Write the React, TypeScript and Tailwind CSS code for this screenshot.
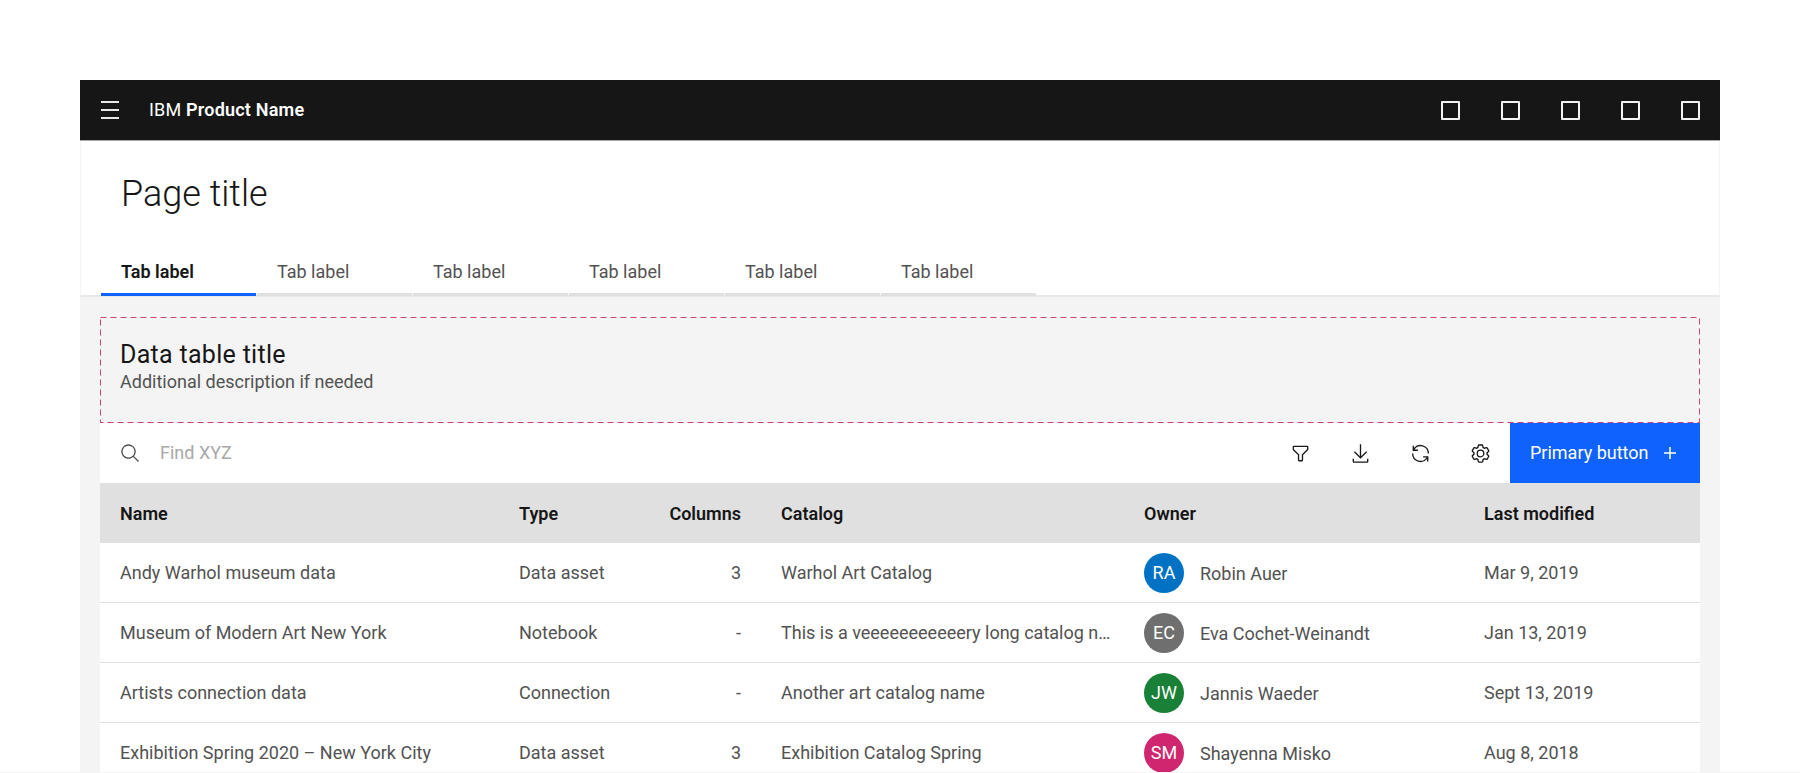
const rows = [
  { name: "Andy Warhol museum data", type: "Data asset", columns: "3", catalog: "Warhol Art Catalog", initials: "RA", owner: "Robin Auer", color: "bg-[#0072c3]", modified: "Mar 9, 2019" },
  { name: "Museum of Modern Art New York", type: "Notebook", columns: "-", catalog: "This is a veeeeeeeeeeery long catalog name", initials: "EC", owner: "Eva Cochet-Weinandt", color: "bg-[#6f6f6f]", modified: "Jan 13, 2019" },
  { name: "Artists connection data", type: "Connection", columns: "-", catalog: "Another art catalog name", initials: "JW", owner: "Jannis Waeder", color: "bg-[#198038]", modified: "Sept 13, 2019" },
  { name: "Exhibition Spring 2020 – New York City", type: "Data asset", columns: "3", catalog: "Exhibition Catalog Spring", initials: "SM", owner: "Shayenna Misko", color: "bg-[#d02670]", modified: "Aug 8, 2018" },
];

const tabs = ["Tab label", "Tab label", "Tab label", "Tab label", "Tab label", "Tab label"];

const cols = "grid grid-cols-[399px_120px_102px_403px_340px_1fr] pl-5 items-center";

function Icon({ d, size = 21 }: { d: string; size?: number }) {
  return (
    <svg width={size} height={size} viewBox="0 0 32 32" fill="currentColor">
      <path d={d} />
    </svg>
  );
}

const filterIcon = "M18,28H14a2,2,0,0,1-2-2V18.41L4.59,11A2,2,0,0,1,4,9.59V6A2,2,0,0,1,6,4H26a2,2,0,0,1,2,2V9.59A2,2,0,0,1,27.41,11L20,18.41V26A2,2,0,0,1,18,28ZM6,6V9.59l8,8V26h4V17.59l8-8V6Z";
const downloadIcon = "M26,24v4H6V24H4v4a2,2,0,0,0,2,2H26a2,2,0,0,0,2-2V24ZM26 14 24.59 12.59 17 20.17 17 2 15 2 15 20.17 7.41 12.59 6 14 16 24 26 14Z";
const renewIcon = "M12 10H6.78A11 11 0 0 1 27 16h2A13 13 0 0 0 6 7.68V4H4v8h8zM20 22h5.22A11 11 0 0 1 5 16H3a13 13 0 0 0 23 8.32V28h2V20H20z";
const settingsIcon = "M27,16.76c0-.25,0-.5,0-.76s0-.51,0-.77l1.92-1.68A2,2,0,0,0,29.3,11L26.94,7a2,2,0,0,0-1.73-1,2,2,0,0,0-.64.1l-2.43.82a11.35,11.35,0,0,0-1.31-.75l-.51-2.52a2,2,0,0,0-2-1.61H13.64a2,2,0,0,0-2,1.61l-.51,2.52a11.48,11.48,0,0,0-1.32.75L7.43,6.06A2,2,0,0,0,6.79,6,2,2,0,0,0,5.06,7L2.7,11a2,2,0,0,0,.41,2.51L5,15.24c0,.25,0,.5,0,.76s0,.51,0,.77L3.11,18.45A2,2,0,0,0,2.7,21L5.06,25a2,2,0,0,0,1.73,1,2,2,0,0,0,.64-.1l2.43-.82a11.35,11.35,0,0,0,1.31.75l.51,2.52a2,2,0,0,0,2,1.61h4.72a2,2,0,0,0,2-1.61l.51-2.52a11.48,11.48,0,0,0,1.32-.75l2.42.82a2,2,0,0,0,.64.1,2,2,0,0,0,1.73-1L29.3,21a2,2,0,0,0-.41-2.51ZM25.21,24l-3.43-1.16a8.86,8.86,0,0,1-2.71,1.57L18.36,28H13.64l-.71-3.55a9.36,9.36,0,0,1-2.7-1.57L6.79,24,4.43,20l2.72-2.4a8.9,8.9,0,0,1,0-3.13L4.43,12,6.79,8l3.43,1.16a8.86,8.86,0,0,1,2.71-1.57L13.64,4h4.72l.71,3.55a9.36,9.36,0,0,1,2.7,1.57L25.21,8,27.57,12l-2.72,2.4a8.9,8.9,0,0,1,0,3.13L27.57,20ZM16,22a6,6,0,1,1,6-6A5.94,5.94,0,0,1,16,22Zm0-10a3.91,3.91,0,0,0-4,4,3.91,3.91,0,0,0,4,4,3.91,3.91,0,0,0,4-4A3.91,3.91,0,0,0,16,12Z";
const searchIcon = "M29,27.5859l-7.5521-7.5521a11.0177,11.0177,0,1,0-1.4141,1.4141L27.5859,29ZM4,13a9,9,0,1,1,9,9A9.01,9.01,0,0,1,4,13Z";
const addIcon = "M17 15 17 8 15 8 15 15 8 15 8 17 15 17 15 24 17 24 17 17 24 17 24 15 17 15Z";

export default function App() {
  return (
    <div className="h-[773px] overflow-hidden border-b border-[#f4f4f4] bg-white px-20 pt-20 font-['Roboto',sans-serif] text-[18px] text-[#525252]">
      <div className="bg-[#f4f4f4]">
        {/* header bar */}
        <div className="flex h-[61px] items-center justify-between border-b-[1px] border-[#a8a8a8] bg-[#161616] pl-[21px] pr-5 text-white">
          <div className="flex items-center">
            <div className="flex w-[18px] flex-col gap-[6px]">
              <span className="h-[2px] bg-[#e8e8e8]" />
              <span className="h-[2px] bg-[#e8e8e8]" />
              <span className="h-[2px] bg-[#e8e8e8]" />
            </div>
            <span className="ml-[30px] pb-[2px] text-[18px] tracking-[0.2px]">
              IBM <span className="font-semibold">Product Name</span>
            </span>
          </div>
          <div className="flex gap-[41px]">
            {[0, 1, 2, 3, 4].map((i) => (
              <span key={i} className="size-[19px] rounded-[1px] border-2 border-[#f4f4f4]" />
            ))}
          </div>
        </div>

        {/* page title + tabs */}
        <div className="h-[156px] border-x border-b-2 border-x-[#f4f4f4] border-b-[#e8e8e8] bg-white">
          <h1 className="pl-10 pt-[30px] text-[36px] font-light leading-[46px] text-[#161616]">Page title</h1>
          <div className="mt-[39px] flex gap-px pl-5">
            {tabs.map((tab, i) => (
              <div
                key={i}
                className={`h-[40px] w-[155px] border-b-[3px] pl-5 pt-1 leading-[24px] ${
                  i === 0 ? "border-[#0f62fe] font-semibold text-[#161616]" : "border-[#e0e0e0]"
                }`}
              >
                {tab}
              </div>
            ))}
          </div>
        </div>

        <div className="px-5 pt-[20px]">
          {/* table title */}
          <div className="relative h-[106px] pl-5 pt-[22px]">
            <svg className="absolute inset-0 h-full w-full" fill="none">
              <rect x="0.5" y="0.5" width="1599" height="105" stroke="#c9427c" strokeDasharray="6 4" />
            </svg>
            <div className="text-[25px] leading-[31px] tracking-[0.3px] text-[#161616]">Data table title</div>
            <div className="text-[18px] leading-[24px]">Additional description if needed</div>
          </div>

          {/* toolbar */}
          <div className="flex h-[60px] items-center bg-white pl-5 text-[#161616]">
            <span className="text-[#525252]">
              <Icon d={searchIcon} />
            </span>
            <span className="ml-[19px] pb-[2px] text-[#a8a8a8]">Find XYZ</span>
            <div className="ml-auto flex items-center">
              {[filterIcon, downloadIcon, renewIcon, settingsIcon].map((d) => (
                <span key={d} className="flex h-[60px] w-[60px] items-center justify-center">
                  <Icon d={d} />
                </span>
              ))}
              <button className="flex h-[60px] w-[190px] items-center justify-between bg-[#0f62fe] pl-5 pr-[18px] text-white">
                <span className="pb-[2px]">Primary button</span>
                <Icon d={addIcon} size={24} />
              </button>
            </div>
          </div>

          {/* table */}
          <div className={`${cols} h-[60px] bg-[#e0e0e0] font-semibold text-[#161616]`}>
            <div>Name</div>
            <div>Type</div>
            <div className="justify-self-end whitespace-nowrap text-right">Columns</div>
            <div className="pl-10">Catalog</div>
            <div>Owner</div>
            <div>Last modified</div>
          </div>
          {rows.map((row) => (
            <div key={row.name} className={`${cols} h-[60px] border-b border-[#e0e0e0] bg-white`}>
              <div>{row.name}</div>
              <div>{row.type}</div>
              <div className="text-right">{row.columns}</div>
              <div className="truncate pl-10 pr-[30px]">{row.catalog}</div>
              <div className="flex items-center gap-4">
                <span className={`flex size-10 items-center justify-center rounded-full text-white ${row.color}`}>
                  {row.initials}
                </span>
                <span className="pt-[2px]">{row.owner}</span>
              </div>
              <div>{row.modified}</div>
            </div>
          ))}
        </div>
      </div>
    </div>
  );
}
